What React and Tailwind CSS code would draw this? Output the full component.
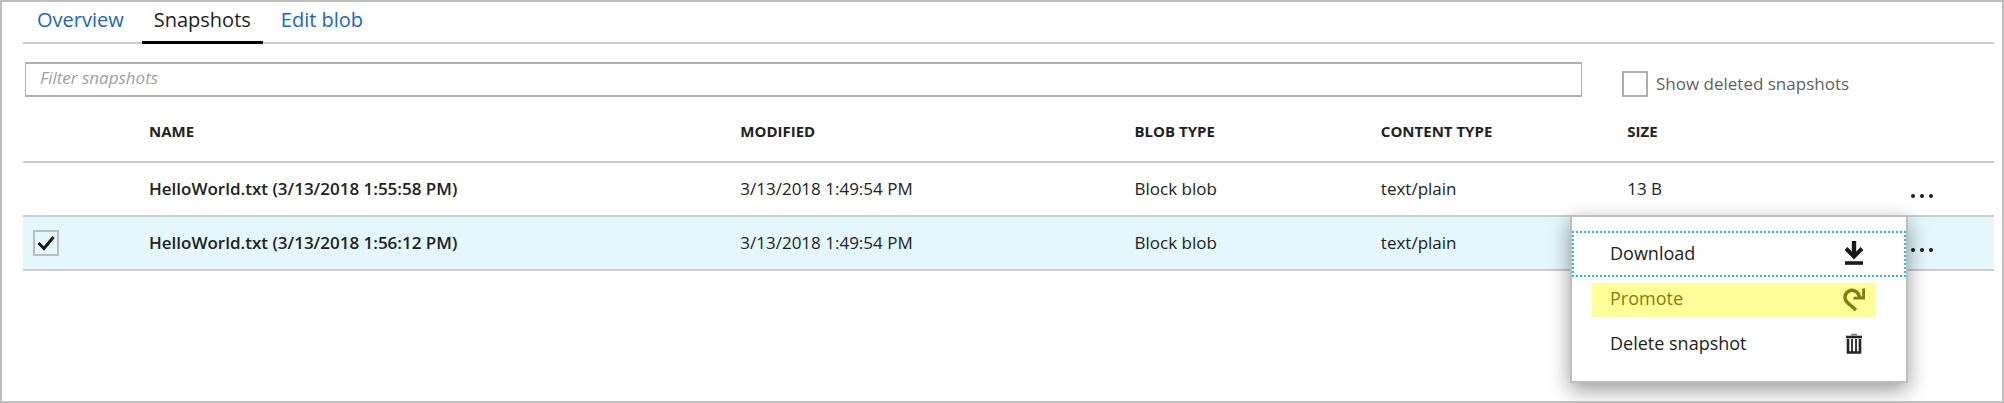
import { useState } from "react";

const tabs = [
  { label: "Overview", active: false },
  { label: "Snapshots", active: true },
  { label: "Edit blob", active: false },
];

const rows = [
  {
    name: "HelloWorld.txt (3/13/2018 1:55:58 PM)",
    modified: "3/13/2018 1:49:54 PM",
    blobType: "Block blob",
    contentType: "text/plain",
    size: "13 B",
    selected: false,
  },
  {
    name: "HelloWorld.txt (3/13/2018 1:56:12 PM)",
    modified: "3/13/2018 1:49:54 PM",
    blobType: "Block blob",
    contentType: "text/plain",
    size: "",
    selected: true,
  },
];

function DownloadIcon() {
  return (
    <svg viewBox="0 0 24 26" className="h-[26px] w-6" fill="none" stroke="#1b1b1b" aria-hidden="true">
      <path d="M12 1v16" strokeWidth="4.4" />
      <path d="M4 8.5l8 8.2L20 8.5" strokeWidth="4" />
      <path d="M3 23h18" strokeWidth="3.6" />
    </svg>
  );
}

function PromoteIcon() {
  return (
    <svg viewBox="0 0 24 26" className="h-[26px] w-6" fill="none" stroke="#7f7f10" aria-hidden="true">
      <path d="M14 24L5.200 16.400A7 7 0 1 1 16.800 9.500L18.500 11.500" strokeWidth="3.400" />
      <path d="M21.600 2.500v9.600H11.500" strokeWidth="2.800" />
    </svg>
  );
}

function TrashIcon() {
  return (
    <svg viewBox="0 0 24 26" className="h-[26px] w-6" fill="none" stroke="#262626" aria-hidden="true">
      <path d="M10 4.5V3.5h4v1" strokeWidth="1.6" stroke="#777777" />
      <path d="M4 6h16" strokeWidth="2.6" />
      <path d="M6 8v13.500h12V8" strokeWidth="2.6" />
      <path d="M10 8v13M14 8v13" strokeWidth="1.8" />
    </svg>
  );
}

function CheckMark() {
  return (
    <svg viewBox="0 0 26 26" className="pointer-events-none col-start-1 row-start-1 h-[26px] w-[26px]" fill="none" stroke="#1b1b1b" aria-hidden="true">
      <path d="M5.500 13l5.500 5.500L20.500 7" strokeWidth="3" />
    </svg>
  );
}

function MoreButton({ label }) {
  return (
    <button type="button" aria-label={label} className="mt-[14px] ml-9 flex h-6 items-center gap-[5px] px-px">
      <span className="size-1 rounded-full bg-[#1b1b1b]" />
      <span className="size-1 rounded-full bg-[#1b1b1b]" />
      <span className="size-1 rounded-full bg-[#1b1b1b]" />
    </button>
  );
}

function SnapshotMenu() {
  return (
    <div
      role="menu"
      className="absolute -top-[2px] right-[86px] z-10 w-[338px] border-2 border-[#bebebe] bg-white pt-[14px] pb-[14px] text-[18px] shadow-[0_7px_20px_rgba(0,0,0,0.4)]"
    >
      <button
        type="button"
        role="menuitem"
        className="flex h-[46px] w-full items-center justify-between border-2 border-dotted border-[#1fbff2] pr-[38px] pb-[2px] pl-[36px] outline-none"
      >
        Download
        <DownloadIcon />
      </button>
      <div className="flex h-[45px] items-center pr-[30px] pl-5">
        <button
          type="button"
          role="menuitem"
          className="flex h-[34px] w-full items-center justify-between bg-[#ffff99] pr-[10px] pb-[2px] pl-[18px] text-[#7f7f10]"
        >
          Promote
          <PromoteIcon />
        </button>
      </div>
      <button type="button" role="menuitem" className="flex h-[45px] w-full items-center justify-between pr-10 pb-[2px] pl-[38px]">
        Delete snapshot
        <TrashIcon />
      </button>
    </div>
  );
}

function SnapshotRow({ row }) {
  const [checked, setChecked] = useState(row.selected);
  return (
    <tr className={row.selected ? "h-[54px] border-b-2 border-[#cccccc] bg-[#e3f7fd]" : "h-[54px] border-b-2 border-[#cccccc]"}>
      <td className="pl-[10px]">
        {row.selected && (
          <span className="grid size-[26px]">
            <input
              type="checkbox"
              aria-label={"Select " + row.name}
              checked={checked}
              onChange={(e) => setChecked(e.target.checked)}
              className="col-start-1 row-start-1 size-[26px] appearance-none border-2 border-[#b9bfc1]"
            />
            {checked && <CheckMark />}
          </span>
        )}
      </td>
      <td className="font-semibold">{row.name}</td>
      <td>{row.modified}</td>
      <td>{row.blobType}</td>
      <td>{row.contentType}</td>
      <td>{row.size}</td>
      <td className="relative">
        <MoreButton label={"More actions for " + row.name} />
        {row.selected && <SnapshotMenu />}
      </td>
    </tr>
  );
}

export default function App() {
  return (
    <div className="min-h-screen overflow-hidden border-2 border-[#bebebe] bg-white pr-2 pl-[21px] font-['Open_Sans','Noto_Sans',sans-serif] text-[#222222]">
      <nav className="flex h-[42px] gap-[6px] border-b-2 border-[#cccccc] pl-[2px] text-[20px]">
        {tabs.map((tab) => (
          <a
            key={tab.label}
            href="#"
            className={
              tab.active
                ? "-mb-[2px] border-b-[3px] border-black px-3 pt-1 leading-7"
                : "px-3 pt-1 leading-7 text-[#1a66c0]"
            }
          >
            {tab.label}
          </a>
        ))}
      </nav>

      <div className="mt-[18px] flex items-end gap-10 pl-[2px]">
        <input
          type="text"
          aria-label="Filter snapshots"
          placeholder="Filter snapshots"
          className="h-[35px] min-w-0 flex-1 border-x border-y-2 border-[#b0b0b0] px-[14px] pb-1 text-[17px] italic outline-none placeholder:text-[#a0a0a0]"
        />
        <label className="flex w-[372px] items-center gap-2 text-[17px] leading-[26px] text-[#606060]">
          <input type="checkbox" className="size-[26px] appearance-none border-2 border-[#b0b0b0] checked:bg-[#1b1b1b]" />
          Show deleted snapshots
        </label>
      </div>

      <table className="w-full table-fixed border-collapse text-left text-[17px]">
        <colgroup>
          <col className="w-[126px]" />
          <col className="w-[30%]" />
          <col className="w-[20%]" />
          <col className="w-[12.5%]" />
          <col className="w-[12.5%]" />
          <col className="w-[12.5%]" />
          <col />
        </colgroup>
        <thead>
          <tr className="h-[65px] border-b-2 border-[#cccccc] text-[15px]">
            <td />
            <th scope="col" className="pt-1 font-bold">NAME</th>
            <th scope="col" className="pt-1 font-bold">MODIFIED</th>
            <th scope="col" className="pt-1 font-bold">BLOB TYPE</th>
            <th scope="col" className="pt-1 font-bold">CONTENT TYPE</th>
            <th scope="col" className="pt-1 font-bold">SIZE</th>
            <td />
          </tr>
        </thead>
        <tbody>
          {rows.map((row) => (
            <SnapshotRow key={row.name} row={row} />
          ))}
        </tbody>
      </table>
    </div>
  );
}
